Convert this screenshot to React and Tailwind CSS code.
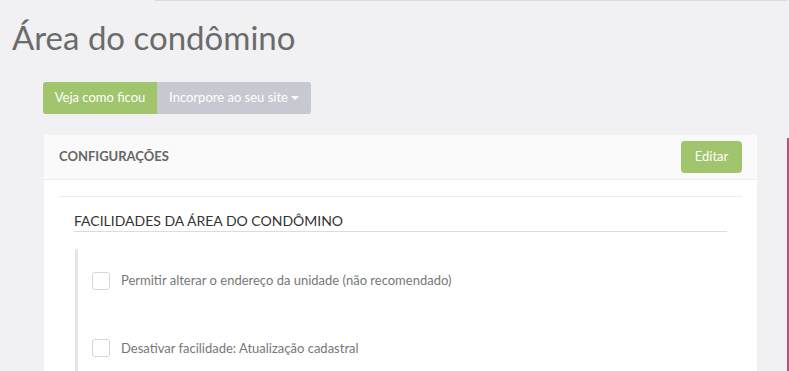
import React from 'react';

const Checkbox = () => (
  <span className="w-[18px] h-[18px] shrink-0 rounded-[3px] border border-[#d6d6d6] bg-white" />
);

const options = [
  'Permitir alterar o endereço da unidade (não recomendado)',
  'Desativar facilidade: Atualização cadastral',
];

export default function App() {
  return (
    <div className="w-[789px] h-[371px] overflow-hidden bg-[#f1f1f3] flex font-['Lato','Open_Sans',sans-serif]">
      <div className="w-[787px] flex flex-col">
        <div className="shrink-0 ml-[155px] h-px bg-[#d9d9dc]" />
        <h1 className="shrink-0 pl-[12px] pt-[15px] text-[33px] leading-[42px] text-[#6b6b6b] font-normal">
          Área do condômino
        </h1>
        <div className="shrink-0 flex mt-[24px] ml-[43px] h-[32px] text-[13px] text-white">
          <button className="w-[114px] bg-[#a0c56d] rounded-l-[3px]">Veja como ficou</button>
          <button className="w-[154px] bg-[#c6c9d2] rounded-r-[3px] flex items-center justify-center gap-[3px]">
            Incorpore ao seu site
            <span className="w-0 h-0 border-l-[4px] border-r-[4px] border-t-[4px] border-l-transparent border-r-transparent border-t-white" />
          </button>
        </div>
        <div className="shrink-0 mt-[21px] ml-[44px] w-[713px] bg-white">
          <div className="h-[45px] bg-[#fafafa] border-b border-[#ececec] flex items-center justify-between px-[15px]">
            <span className="text-[13px] font-bold text-[#666]">CONFIGURAÇÕES</span>
            <button className="w-[61px] h-[32px] rounded-[4px] bg-[#a0c56d] text-white text-[13px]">Editar</button>
          </div>
          <div className="px-[15px] pt-[16px]">
            <div className="border-t border-[#ececec] pl-[15px] pr-[15px] pt-[14px]">
              <div className="border-b border-[#dcdcdc] text-[14px] leading-[20px] text-[#333]">
                FACILIDADES DA ÁREA DO CONDÔMINO
              </div>
              <div className="mt-[17px] ml-[1px] border-l-[3px] border-[#e6e6e6] pl-[14px] pt-[22px] pb-[40px] flex flex-col gap-[48px]">
                {options.map((o) => (
                  <label key={o} className="flex items-center gap-[11px] text-[13px] text-[#777]">
                    <Checkbox />
                    {o}
                  </label>
                ))}
              </div>
            </div>
          </div>
        </div>
      </div>
      <div className="w-[2px] mt-[138px] bg-[#b5566f]" />
    </div>
  );
}
